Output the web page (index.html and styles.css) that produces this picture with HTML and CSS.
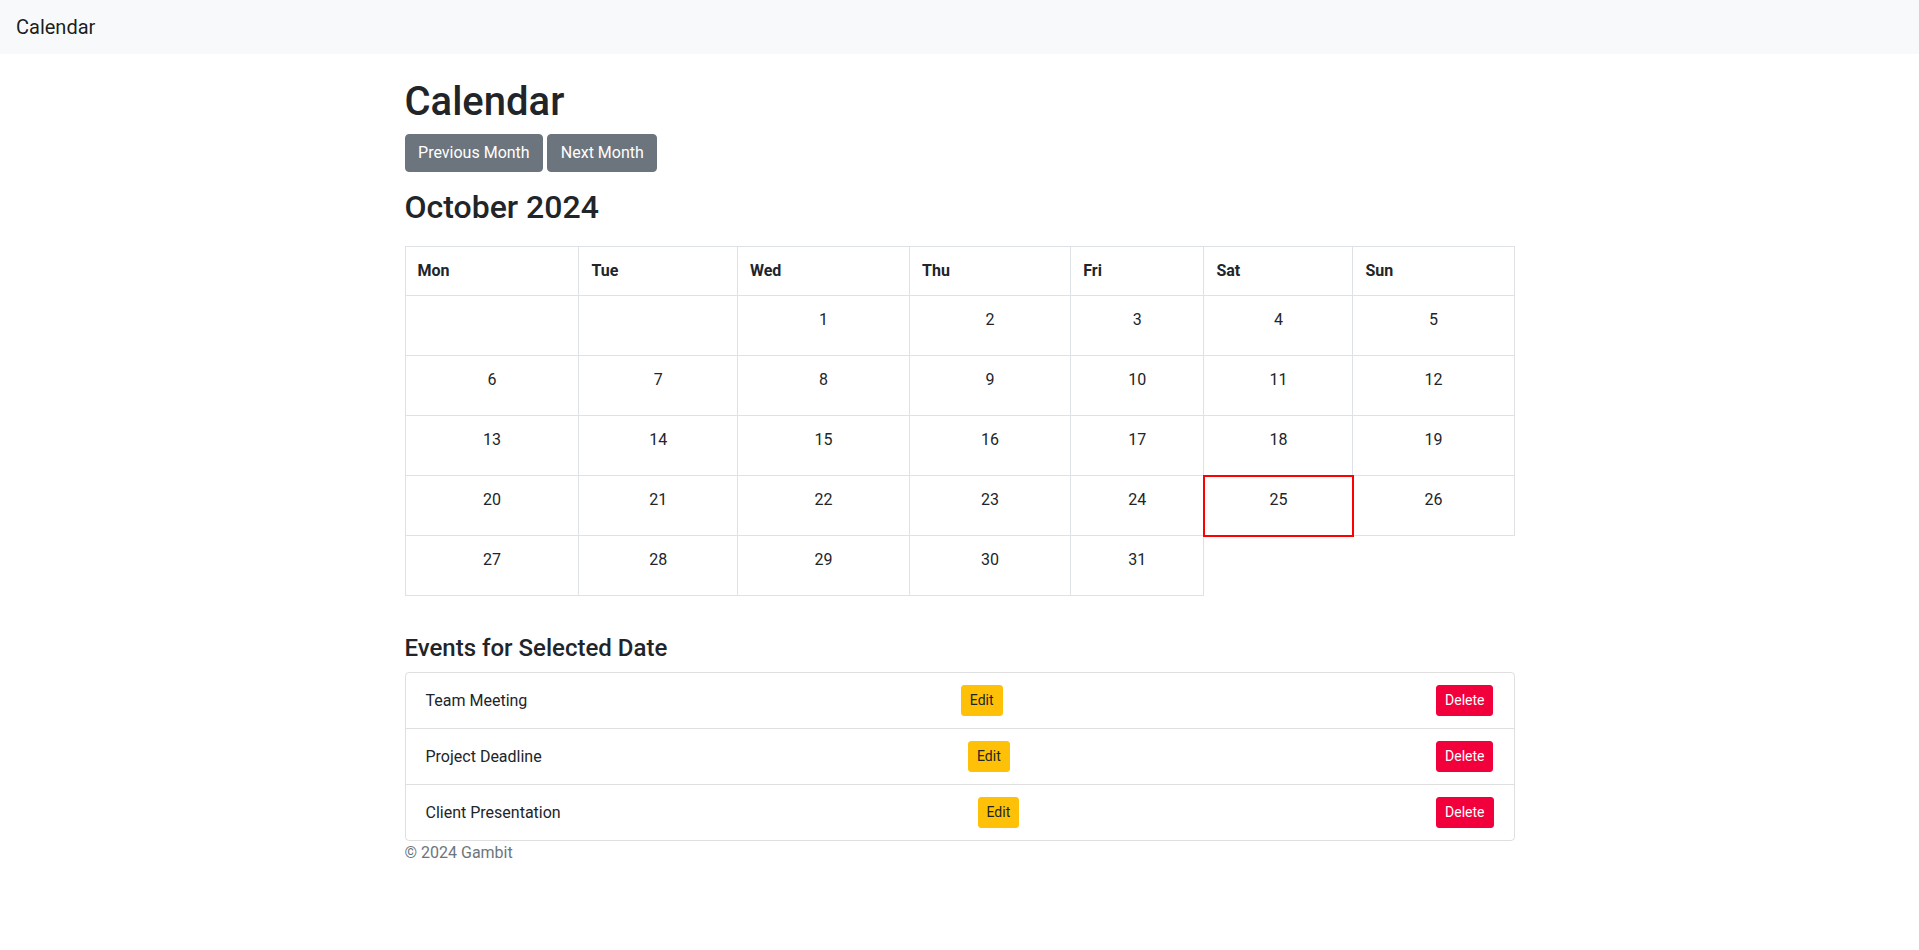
FILE: index.html
```html
<!DOCTYPE html>
<html lang="en">
<head>
<meta charset="utf-8">
<title>Calendar</title>
<link rel="stylesheet" href="styles.css">
</head>
<body>
<nav class="navbar">
  <a class="brand" href="#">Calendar</a>
</nav>
<main class="container">
  <h1 class="title">Calendar</h1>
  <div class="month-nav">
    <button class="btn btn-secondary">Previous Month</button>
    <button class="btn btn-secondary">Next Month</button>
  </div>
  <h2 class="month">October 2024</h2>
  <table class="calendar">
    <thead>
      <tr><th>Mon</th><th>Tue</th><th>Wed</th><th>Thu</th><th>Fri</th><th>Sat</th><th>Sun</th></tr>
    </thead>
    <tbody>
      <tr><td></td><td></td><td>1</td><td>2</td><td>3</td><td>4</td><td>5</td></tr>
      <tr><td>6</td><td>7</td><td>8</td><td>9</td><td>10</td><td>11</td><td>12</td></tr>
      <tr><td>13</td><td>14</td><td>15</td><td>16</td><td>17</td><td>18</td><td>19</td></tr>
      <tr><td>20</td><td>21</td><td>22</td><td>23</td><td>24</td><td class="selected">25</td><td>26</td></tr>
      <tr><td>27</td><td>28</td><td>29</td><td>30</td><td>31</td></tr>
    </tbody>
  </table>
  <h4 class="events-title">Events for Selected Date</h4>
  <ul class="event-list">
    <li class="event-item"><span>Team Meeting</span><button class="btn-sm btn-warning">Edit</button><button class="btn-sm btn-danger">Delete</button></li>
    <li class="event-item"><span>Project Deadline</span><button class="btn-sm btn-warning">Edit</button><button class="btn-sm btn-danger">Delete</button></li>
    <li class="event-item"><span>Client Presentation</span><button class="btn-sm btn-warning">Edit</button><button class="btn-sm btn-danger">Delete</button></li>
  </ul>
  <footer class="footer">© 2024 Gambit</footer>
</main>
</body>
</html>
```
FILE: styles.css
```css
* { box-sizing: border-box; }
html, body { margin: 0; padding: 0; }
body {
  font-family: Roboto, "Liberation Sans", sans-serif;
  font-size: 16px;
  line-height: 1.5;
  color: #212529;
  background: #fff;
}
.navbar {
  background: #f8f9fa;
  height: 54px;
  padding: 12px 16px;
  display: flex;
  align-items: center;
}
.brand {
  font-size: 20px;
  line-height: 30px;
  color: rgba(0,0,0,.9);
  text-decoration: none;
}
.container {
  max-width: 1140px;
  margin: 24px auto 0;
  padding: 0 15px;
}
.title {
  font-size: 40px;
  font-weight: 500;
  line-height: 1.2;
  margin: 0 0 8px;
}
.month-nav {
  margin-bottom: 16px;
  display: flex;
  gap: 4px;
}
.btn {
  font-family: inherit;
  font-size: 16px;
  line-height: 1.5;
  padding: 6px 12.6px;
  border: 1px solid transparent;
  border-radius: 4px;
  cursor: pointer;
}
.btn-secondary {
  background: #6c757d;
  border-color: #6c757d;
  color: #fff;
}
.month {
  font-size: 32px;
  font-weight: 500;
  line-height: 1.2;
  margin: 0 0 20px;
}
.calendar {
  width: 100%;
  border-collapse: collapse;
  margin-bottom: 16px;
}
.calendar th, .calendar td {
  border: 1px solid #dee2e6;
  padding: 12px;
  vertical-align: top;
}
.calendar th {
  text-align: left;
  font-weight: 700;
}
.calendar td {
  text-align: center;
  padding-bottom: 23px;
}
.calendar td.selected {
  outline: 2px solid #ff0000;
  outline-offset: -1px;
}
.events-title {
  font-size: 24px;
  font-weight: 500;
  line-height: 1.2;
  margin: 38px 0 9px;
}
.event-list {
  list-style: none;
  margin: 0;
  padding: 0;
  border: 1px solid rgba(0,0,0,.125);
  border-radius: 4px;
}
.event-item {
  display: flex;
  justify-content: space-between;
  align-items: center;
  padding: 12px 20px;
}
.event-item + .event-item {
  border-top: 1px solid rgba(0,0,0,.125);
}
.btn-sm {
  font-family: inherit;
  font-size: 14px;
  line-height: 1.5;
  padding: 4px 8px;
  border: 1px solid transparent;
  border-radius: 3px;
  cursor: pointer;
}
.btn-warning {
  background: #ffc107;
  border-color: #ffc107;
  color: #212529;
}
.btn-danger {
  background: #f2003c;
  border-color: #f2003c;
  color: #fff;
}
.footer {
  color: #6c757d;
}
```
